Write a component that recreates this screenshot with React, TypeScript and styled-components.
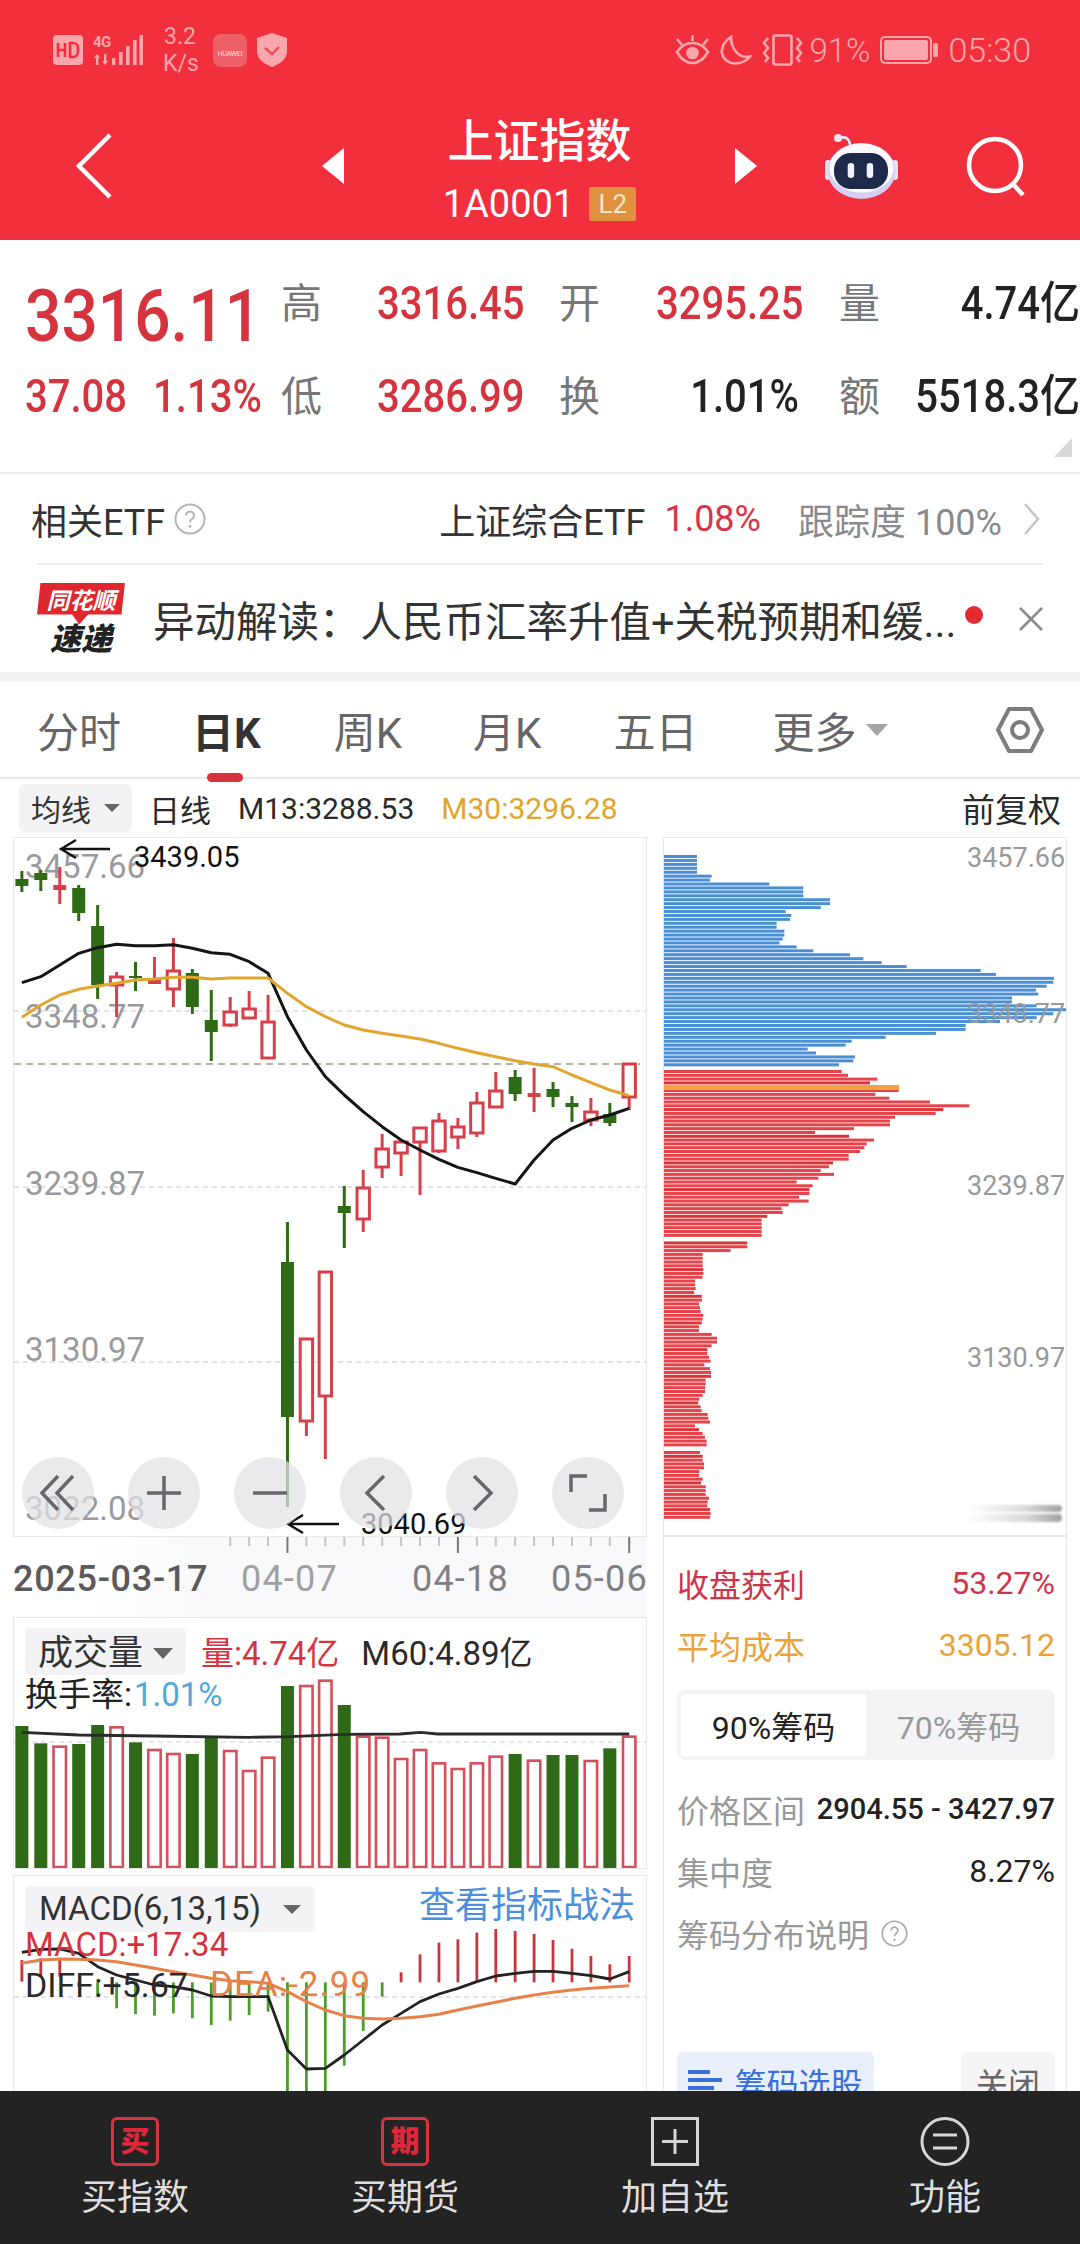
import styled, { createGlobalStyle } from 'styled-components'

const RED = '#d5343f'
const GREEN = '#2f6b16'
const STATUS = '#faa6ac'

const GlobalStyle = createGlobalStyle`
  html, body { margin: 0; padding: 0; background: #fff; }
  body { font-family: Roboto, "Noto Sans CJK SC", sans-serif; color: #222; }
  * { box-sizing: border-box; }
`

// scale of the reference crops used to read the curves
const px = (z: number) => z / 2.376
const py = (z: number, top: number) => top + z / 3

// wick top, wick bottom, body top, body bottom, up
const CANDLES: [number, number, number, number, boolean][] = [
  [871, 892, 879, 886, false], [870, 891, 873, 880, false], [867, 904, 885, 890, true],
  [885, 921, 888, 913, false], [905, 999, 926, 985, false], [972, 1017, 977, 985, true],
  [962, 991, 976, 978, false], [957, 984, 978, 984, true], [938, 1007, 971, 989, true],
  [969, 1014, 973, 1007, false], [990, 1061, 1020, 1032, false], [997, 1027, 1012, 1025, true],
  [991, 1019, 1009, 1018, true], [995, 1058, 1022, 1058, true], [1222, 1507, 1262, 1417, false],
  [1339, 1436, 1339, 1421, true], [1272, 1459, 1272, 1396, true], [1186, 1248, 1206, 1213, false],
  [1170, 1232, 1188, 1219, true], [1134, 1178, 1149, 1167, true], [1140, 1176, 1142, 1153, true],
  [1128, 1195, 1128, 1142, true], [1113, 1153, 1121, 1151, true], [1118, 1149, 1127, 1137, true],
  [1092, 1137, 1103, 1133, true], [1072, 1107, 1091, 1107, true], [1070, 1101, 1077, 1094, false],
  [1068, 1112, 1093, 1097, true], [1082, 1107, 1089, 1097, false], [1096, 1122, 1103, 1107, false],
  [1098, 1126, 1112, 1120, true], [1103, 1126, 1114, 1123, false], [1064, 1110, 1064, 1097, true],
]

const XS = [52, 97, 142, 187, 232, 277, 322, 367, 412, 457, 502, 547, 592, 637, 683, 728, 773, 818, 863, 908, 953, 998, 1043, 1088, 1133, 1178, 1224, 1269, 1314, 1359, 1404, 1449, 1495]

const M13 = [908, 890, 855, 820, 803, 793, 797, 797, 794, 805, 818, 823, 845, 880, 1010, 1110, 1190, 1245, 1295, 1340, 1380, 1410, 1438, 1462, 1478, 1495, 1512, 1440, 1380, 1345, 1320, 1305, 1285]
const M30 = [1012, 975, 945, 928, 918, 910, 900, 897, 892, 892, 897, 894, 894, 894, 940, 980, 1010, 1035, 1050, 1060, 1068, 1077, 1090, 1105, 1118, 1130, 1142, 1152, 1160, 1185, 1208, 1230, 1247]

const VOLUME = [378, 430, 440, 432, 375, 382, 427, 450, 462, 462, 413, 453, 513, 473, 258, 258, 242, 315, 410, 413, 477, 450, 490, 507, 490, 470, 462, 482, 465, 465, 483, 445, 410]
const VOLUME_LINE: [number, number][] = [[52, 397], [187, 405], [365, 408], [590, 412], [690, 410], [818, 403], [950, 402], [1000, 397], [1040, 402], [1495, 402]]

const MACD_BARS = [[270, 335], [265, 320], [267, 320], [337, 350], [337, 378], [337, 415], [337, 432], [337, 437], [337, 430], [337, 445], [337, 465], [337, 452], [337, 435], [337, 425], [337, 760], [337, 760], [337, 760], [337, 587], [337, 483], [337, 380], [307, 337], [253, 337], [218, 337], [208, 337], [188, 337], [177, 337], [183, 337], [192, 337], [210, 337], [236, 337], [258, 337], [283, 337], [258, 337]]
const DIFF = [247, 238, 237, 250, 290, 315, 330, 345, 350, 360, 378, 380, 380, 380, 540, 597, 595, 555, 510, 465, 430, 395, 372, 355, 335, 318, 310, 304, 304, 310, 317, 327, 305]
const DEA = [280, 270, 267, 268, 270, 275, 285, 295, 305, 315, 325, 332, 335, 340, 365, 395, 420, 437, 445, 447, 445, 440, 433, 420, 408, 397, 385, 375, 367, 360, 355, 351, 347]

const CHIP_BLUE = [141, 141, 141, 141, 141, 185, 180, 358, 460, 460, 460, 540, 540, 512, 407, 424, 420, 380, 380, 403, 403, 398, 388, 440, 490, 600, 640, 695, 770, 992, 1038, 1212, 1210, 1190, 1158, 1165, 1086, 1086, 1160, 1250, 1210, 1160, 1050, 947, 947, 858, 707, 605, 587, 473, 498, 615, 610, 567]
const CHIP_RED = [575, 594, 682, 660, 746, 746, 676, 718, 840, 958, 880, 857, 735, 720, 720, 612, 495, 597, 672, 650, 643, 630, 596, 596, 549, 537, 512, 552, 505, 440, 488, 478, 478, 447, 476, 416, 395, 398, 352, 335, 335, 335, 335, 335, 0, 292, 292, 242, 158, 158, 158, 158, 160, 160, 157, 135, 135, 137, 132, 155, 156, 147, 150, 152, 160, 158, 155, 147, 147, 185, 201, 201, 185, 172, 172, 177, 182, 163, 180, 183, 183, 167, 167, 165, 165, 158, 148, 145, 152, 155, 173, 175, 180, 135, 147, 158, 165, 170, 170, 0, 150, 158, 158, 162, 162, 148, 147, 158, 153, 167, 167, 167, 177, 173, 172, 180, 182, 180]

const toPoints = (xs: number[], ys: number[], top: number) => xs.map((x, i) => `${px(x)},${py(ys[i], top)}`).join(' ')

const Page = styled.div`
  width: 1080px;
  height: 2244px;
  overflow: hidden;
  display: flex;
  flex-direction: column;
  background: #fff;
`

const Header = styled.header`
  height: 240px;
  background: #f2303d;
  color: #fff;
  flex: none;
`

const StatusBar = styled.div`
  height: 100px;
  padding: 0 49px 0 53px;
  display: flex;
  align-items: center;
  justify-content: space-between;
  color: ${STATUS};
`

const StatusGroup = styled.div`
  display: flex;
  align-items: center;
  gap: 10px;
`

const Speed = styled.div`
  font-size: 23px;
  line-height: 27px;
  width: 34px;
  margin: 0 6px 0 10px;
  text-align: center;
`

const StatusText = styled.span<{ $size: number; $left?: number }>`
  font-size: ${p => p.$size}px;
  font-weight: 300;
  margin-left: ${p => p.$left ?? 0}px;
`

const HuaweiBadge = styled.div`
  width: 34px;
  height: 33px;
  border-radius: 8px;
  background: #ee6068;
  color: #fde;
  font-size: 7px;
  letter-spacing: -0.2px;
  display: flex;
  align-items: flex-end;
  justify-content: center;
  padding-bottom: 9px;
`

const NavBar = styled.nav`
  height: 140px;
  padding-bottom: 8px;
  display: grid;
  grid-template-columns: 322px 22px 391px 22px 68px 73px 68px 60px 54px;
  align-items: center;
`

const BackCell = styled.div`
  padding-left: 76px;
  display: flex;
`

const TitleBlock = styled.div`
  margin-top: 7px;
  display: flex;
  flex-direction: column;
  align-items: center;
  gap: 23px;
`

const Title = styled.div`
  font-size: 46px;
  line-height: 46px;
  font-weight: 500;
`

const SubTitle = styled.div`
  display: flex;
  align-items: center;
  gap: 15px;
  font-size: 38px;
  line-height: 34px;
  font-weight: 400;
`

const L2Badge = styled.span`
  width: 47px;
  height: 34px;
  background: #e0913f;
  color: #fbe6cf;
  border-radius: 2px;
  font-size: 26px;
  display: flex;
  align-items: center;
  justify-content: center;
`

const Quote = styled.section`
  position: relative;
  height: 232px;
  flex: none;
  padding: 34px 0 0 25px;
  display: grid;
  grid-template-columns: 256px 96px 182px 97px 183px 66px 175px;
  grid-auto-rows: 60px;
  row-gap: 33px;
  align-items: center;
`

const BigPrice = styled.div`
  font-size: 64px;
  line-height: 70px;
  font-weight: 500;
  color: ${RED};
  margin-top: 26px;
  transform: scaleY(1.13);
`

const LeadRow = styled.div`
  display: flex;
  gap: 26px;
`

const QuoteLabel = styled.div`
  font-size: 41px;
  line-height: 50px;
  color: #777;
`

const QuoteValue = styled.div<{ $dark?: boolean; $right?: boolean; $pad?: number }>`
  font-size: 40px;
  line-height: 50px;
  font-weight: 500;
  white-space: nowrap;
  color: ${p => (p.$dark ? '#222' : RED)};
  text-align: ${p => (p.$right ? 'right' : 'left')};
  padding-right: ${p => p.$pad ?? 0}px;
  transform: scaleY(1.14);
`

const Corner = styled.div`
  position: absolute;
  right: 8px;
  bottom: 15px;
  width: 18px;
  height: 19px;
  background: #d9d9dc;
  clip-path: polygon(100% 0, 100% 100%, 0 100%);
`

const EtfRow = styled.div`
  height: 91px;
  flex: none;
  border-top: 2px solid #ececee;
  padding: 0 39px 0 31px;
  display: flex;
  align-items: center;
  font-size: 36px;
  color: #333;
`

const EtfSide = styled.div<{ $grey?: boolean; $red?: boolean; $gap?: number }>`
  margin-left: ${p => p.$gap ?? 0}px;
  color: ${p => (p.$red ? '#d8344a' : p.$grey ? '#8a8a8e' : 'inherit')};
  white-space: nowrap;
  display: flex;
`

const NewsRow = styled.div`
  height: 109px;
  flex: none;
  margin: 0 37px;
  border-top: 2px solid #ececee;
  display: flex;
  align-items: center;
`

const Logo = styled.div`
  width: 88px;
  margin: 0 28px 0 0;
  display: flex;
  flex-direction: column;
  align-items: center;
`

const LogoFlag = styled.div`
  width: 88px;
  height: 42px;
  padding-bottom: 10px;
  background: #e0262f;
  color: #fff;
  font-size: 23px;
  font-weight: 700;
  font-style: italic;
  display: flex;
  align-items: center;
  justify-content: center;
  clip-path: polygon(4% 0, 100% 0, 96% 76%, 58% 76%, 48% 100%, 40% 76%, 0 76%);
`

const LogoText = styled.div`
  font-size: 31px;
  line-height: 30px;
  font-weight: 900;
  font-style: italic;
  color: #222;
`

const NewsText = styled.div`
  width: 804px;
  flex: none;
  font-size: 41.5px;
  color: #333;
  white-space: nowrap;
`

const RedDot = styled.span`
  width: 18px;
  height: 18px;
  border-radius: 50%;
  background: #e52a32;
  margin: -8px 36px 0 8px;
  flex: none;
`

const Band = styled.div`
  height: 10px;
  flex: none;
  background: #f3f3f5;
`

const Tabs = styled.div`
  height: 97px;
  flex: none;
  border-bottom: 2px solid #e8e8ea;
  display: flex;
  align-items: center;
  padding: 0 36px 0 37px;
  font-size: 42px;
  color: #666;
`

const Tab = styled.div<{ $active?: boolean; $left: number }>`
  position: relative;
  margin-left: ${p => p.$left}px;
  font-weight: ${p => (p.$active ? 700 : 400)};
  color: ${p => (p.$active ? '#333' : '#666')};
  white-space: nowrap;
  display: flex;
  align-items: center;
  gap: 10px;
`

const TabMark = styled.span`
  position: absolute;
  left: 15px;
  bottom: -22px;
  width: 36px;
  height: 9px;
  border-radius: 5px;
  background: ${RED};
`

const DownTriangle = styled.span<{ $size: number; $color?: string }>`
  width: 0;
  height: 0;
  flex: none;
  border-left: ${p => p.$size}px solid transparent;
  border-right: ${p => p.$size}px solid transparent;
  border-top: ${p => p.$size * 1.1}px solid ${p => p.$color ?? '#666'};
`

const ChartArea = styled.div`
  flex: 1;
  min-height: 0;
  overflow: hidden;
  padding: 0 13px;
`

const Toolbar = styled.div`
  height: 58px;
  display: flex;
  align-items: center;
  gap: 27px;
  padding: 0 6px;
  font-size: 30px;
`

const Chip = styled.div<{ $width: number; $height: number; $gap: number; $size: number; $drop?: number }>`
  width: ${p => p.$width}px;
  height: ${p => p.$height}px;
  padding-top: ${p => p.$drop ?? 0}px;
  background: #f3f3f5;
  border-radius: 5px;
  display: flex;
  align-items: center;
  justify-content: center;
  gap: ${p => p.$gap}px;
  font-size: ${p => p.$size}px;
  color: #333;
  white-space: nowrap;
  flex: none;
`

const ToolText = styled.span<{ $color?: string; $end?: boolean; $left?: number; $size?: number }>`
  color: ${p => p.$color ?? '#2a2a2a'};
  white-space: nowrap;
  font-size: ${p => p.$size ?? 30}px;
  margin-left: ${p => (p.$end ? 'auto' : `${p.$left ?? 0}px`)};
`

const Columns = styled.div`
  display: grid;
  grid-template-columns: 634px 404px;
  column-gap: 16px;
  align-items: start;
`

const LeftColumn = styled.div`
  display: flex;
  flex-direction: column;
`

const Panel = styled.div<{ $height: number }>`
  position: relative;
  width: 634px;
  height: ${p => p.$height}px;
  border: 1px solid #e8e8ec;
  overflow: hidden;
`

const ChartSvg = styled.svg`
  display: block;
  font-family: Roboto, sans-serif;
`

const ButtonRow = styled.div`
  position: absolute;
  left: 8px;
  bottom: 7px;
  display: flex;
  gap: 34px;
`

const RoundButton = styled.div`
  width: 72px;
  height: 72px;
  border-radius: 50%;
  background: rgba(226, 226, 229, 0.72);
  display: flex;
  align-items: center;
  justify-content: center;
`

const DateStrip = styled.div`
  height: 80px;
  background: linear-gradient(90deg, #fff 12%, #f9f9fb 30%);
`

const DateRow = styled.div`
  display: grid;
  grid-template-columns: 228px 171px 139px auto;
  font-size: 36px;
  line-height: 40px;
  margin-top: 6px;
`

const DateText = styled.span<{ $color: string; $bold?: boolean }>`
  color: ${p => p.$color};
  letter-spacing: ${p => (p.$bold ? 0.7 : 1.2)}px;
  font-weight: ${p => (p.$bold ? 500 : 400)};
  white-space: nowrap;
`

const Legend = styled.div`
  position: absolute;
  left: 11px;
  top: 10px;
  right: 11px;
  font-size: 33px;
  line-height: 40px;
`

const LegendRow = styled.div<{ $gap?: number; $up?: number }>`
  display: flex;
  align-items: center;
  gap: ${p => p.$gap ?? 0}px;
  margin-top: ${p => -(p.$up ?? 0)}px;
`

const LegendText = styled.span<{ $color?: string; $left?: number; $end?: boolean; $up?: number; $size?: number; $track?: number }>`
  color: ${p => p.$color ?? '#2a2a2a'};
  white-space: nowrap;
  font-size: ${p => p.$size ?? 33}px;
  letter-spacing: ${p => p.$track ?? 0}px;
  margin-left: ${p => (p.$end ? 'auto' : `${p.$left ?? 0}px`)};
  margin-top: ${p => -(p.$up ?? 0)}px;
`

const VolumePanel = styled(Panel)`
  margin-bottom: 6px;
`

const RightPanel = styled.div`
  width: 404px;
  height: 1300px;
  border: 1px solid #e8e8ec;
  border-bottom: none;
  display: flex;
  flex-direction: column;
`

const ChipChart = styled.div`
  height: 699px;
  border-bottom: 2px solid #e8e8ec;
  flex: none;
`

const Stats = styled.div`
  padding: 15px 11px 0 13px;
  font-size: 32px;
`

const StatRow = styled.div<{ $color?: string }>`
  height: 62px;
  display: flex;
  align-items: center;
  justify-content: space-between;
  color: ${p => p.$color ?? '#999'};
  white-space: nowrap;
`

const StatValue = styled.span<{ $small?: boolean }>`
  color: inherit;
  font-size: ${p => (p.$small ? 29 : 32)}px;
`

const StatDark = styled(StatValue)`
  color: #222;
  font-weight: ${p => (p.$small ? 500 : 400)};
`

const Toggle = styled.div`
  height: 70px;
  margin: 14px 0 18px;
  background: #f4f4f6;
  border-radius: 8px;
  padding: 4px;
  display: grid;
  grid-template-columns: 185px 1fr;
`

const ToggleItem = styled.div<{ $active?: boolean }>`
  background: ${p => (p.$active ? '#fff' : 'transparent')};
  color: ${p => (p.$active ? '#222' : '#999')};
  border-radius: 4px;
  display: flex;
  align-items: center;
  justify-content: center;
`

const HelpLabel = styled.span`
  display: flex;
  align-items: center;
  gap: 12px;
`

const PanelButtons = styled.div`
  margin-top: 88px;
  display: flex;
  justify-content: space-between;
`

const PanelButton = styled.div<{ $blue?: boolean; $width: number }>`
  width: ${p => p.$width}px;
  height: 60px;
  border-radius: 6px;
  background: ${p => (p.$blue ? '#e9effb' : '#f5f5f7')};
  color: ${p => (p.$blue ? '#3a6fd8' : '#666')};
  display: flex;
  align-items: center;
  justify-content: center;
  gap: 12px;
`

const BottomNav = styled.nav`
  height: 153px;
  flex: none;
  background: #232323;
  display: grid;
  grid-template-columns: repeat(4, 270px);
`

const NavItem = styled.div`
  display: flex;
  flex-direction: column;
  align-items: center;
  padding-top: 26px;
  gap: 12px;
  color: #dedede;
  font-size: 36px;
  line-height: 40px;
`

const RedIcon = styled.div`
  width: 48px;
  height: 49px;
  border: 3px solid #d9333e;
  border-radius: 6px;
  color: #e0263a;
  font-size: 29px;
  font-weight: 900;
  display: flex;
  align-items: center;
  justify-content: center;
`

const LineIcon = styled.svg`
  display: block;
  color: #d6d6d6;
`

const CandleChart = () => (
  <ChartSvg width={632} height={698} viewBox="14 838 632 698">
    {[1011, 1187, 1362].map(y => (
      <line key={y} x1={14} x2={646} y1={y} y2={y} stroke="#dcdce0" strokeWidth={1.5} strokeDasharray="5 4" />
    ))}
    <line x1={14} x2={640} y1={1064} y2={1064} stroke="#b4b4a6" strokeWidth={2} strokeDasharray="7 5" />
    {[['3457.66', 878], ['3348.77', 1028], ['3239.87', 1195], ['3130.97', 1361], ['3022.08', 1520]].map(([t, y]) => (
      <text key={t} x={25} y={y} fontSize={33} fill="#9a9a9e">{t}</text>
    ))}
    {CANDLES.map(([wt, wb, bt, bb, up], i) => {
      const x = px(XS[i])
      const color = up ? '#d5404a' : GREEN
      const thin = bb - bt < 8
      return (
        <g key={i}>
          <line x1={x} x2={x} y1={wt} y2={wb} stroke={color} strokeWidth={3} />
          {up && !thin ? (
            <rect x={x - 6.2} y={bt} width={12.4} height={bb - bt} fill="#fff" stroke={color} strokeWidth={3} />
          ) : (
            <rect x={x - 6.5} y={bt} width={13} height={bb - bt} fill={color} />
          )}
        </g>
      )
    })}
    <polyline points={toPoints(XS, M13, 680)} fill="none" stroke="#141414" strokeWidth={3} strokeLinejoin="round" />
    <polyline points={toPoints(XS, M30, 680)} fill="none" stroke="#e0a62e" strokeWidth={3} strokeLinejoin="round" />
    <path d="M110 849H61M76 840l-15 9 15 9" fill="none" stroke="#111" strokeWidth={2.4} />
    <text x={134} y={867} fontSize={29} fill="#111">3439.05</text>
    <path d="M339 1524H288M303 1515l-15 9 15 9" fill="none" stroke="#111" strokeWidth={2.4} />
    <text x={361} y={1534} fontSize={29} fill="#111">3040.69</text>
  </ChartSvg>
)

const VolumeChart = () => (
  <ChartSvg width={632} height={250} viewBox="14 1618 632 250">
    <line x1={14} x2={646} y1={1742} y2={1742} stroke="#e0e0e4" strokeWidth={1.5} strokeDasharray="5 4" />
    {VOLUME.map((z, i) => {
      const up = CANDLES[i][4]
      const top = py(z, 1600)
      const x = px(XS[i])
      return up ? (
        <rect key={i} x={x - 6.2} y={top} width={12.4} height={1867 - top} fill="#fff" stroke="#d5505a" strokeWidth={2.6} />
      ) : (
        <rect key={i} x={x - 6.5} y={top} width={13} height={1868 - top} fill={GREEN} />
      )
    })}
    <polyline points={VOLUME_LINE.map(([x, y]) => `${px(x)},${py(y, 1600)}`).join(' ')} fill="none" stroke="#2b2b2b" strokeWidth={2.8} />
  </ChartSvg>
)

const MacdChart = () => (
  <ChartSvg width={632} height={240} viewBox="14 1876 632 240">
    <line x1={14} x2={646} y1={1997} y2={1997} stroke="#dcdce0" strokeWidth={1.5} strokeDasharray="5 4" />
    {MACD_BARS.map(([a, b], i) => (
      <line key={i} x1={px(XS[i])} x2={px(XS[i])} y1={py(a, 1870)} y2={py(b, 1870)} stroke={a < 337 ? '#c9343e' : '#4b9e2a'} strokeWidth={2.8} />
    ))}
    <polyline points={toPoints(XS, DIFF, 1870)} fill="none" stroke="#222" strokeWidth={2.8} strokeLinejoin="round" />
    <polyline points={toPoints(XS, DEA, 1870)} fill="none" stroke="#e8804a" strokeWidth={3} strokeLinejoin="round" />
  </ChartSvg>
)

const ChipDistribution = () => (
  <ChartSvg width={402} height={697} viewBox="664 838 402 697">
    <defs>
      <linearGradient id="smudge">
        <stop offset="0" stopColor="#fff" />
        <stop offset="0.6" stopColor="#dcdcdc" />
        <stop offset="1" stopColor="#a0a0a0" />
      </linearGradient>
      <filter id="soft"><feGaussianBlur stdDeviation="1.2" /></filter>
    </defs>
    {CHIP_BLUE.map((z, i) => (
      <rect key={i} x={664} y={855 + i * 3.93} width={(z - 42) / 3} height={3} fill="#4a8fd6" />
    ))}
    {CHIP_RED.map((z, i) => (
      <rect key={i} x={664} y={1070 + i * 3.81} width={Math.max(z - 42, 0) / 3} height={3} fill={i % 7 === 3 ? '#d8343a' : '#e5424a'} />
    ))}
    <rect x={664} y={1085} width={235} height={5} fill="#f2a33f" />
    {[['3457.66', 867], ['3348.77', 1023], ['3239.87', 1195], ['3130.97', 1367]].map(([t, y]) => (
      <text key={t} x={967} y={y} fontSize={27} fill="#999">{t}</text>
    ))}
    <g filter="url(#soft)">
      <rect x={967} y={1505} width={95} height={7} rx={3.5} fill="url(#smudge)" />
      <rect x={967} y={1514} width={95} height={8} rx={4} fill="url(#smudge)" />
    </g>
  </ChartSvg>
)

const HelpIcon = ({ size, color }: { size: number; color: string }) => (
  <svg width={size} height={size} viewBox="0 0 32 32">
    <circle cx={16} cy={16} r={14.5} fill="none" stroke={color} strokeWidth={2} />
    <path d="M12 12.5a4 4 0 1 1 6.3 3.2c-1.5 1-2.3 1.8-2.3 3.6" fill="none" stroke={color} strokeWidth={2} />
    <circle cx={16} cy={23.5} r={1.4} fill={color} />
  </svg>
)

const Robot = () => (
  <svg width={73} height={66} viewBox="0 0 73 66">
    <path d="M15 5c6-2 9 1 10 6" fill="none" stroke="#efe9fb" strokeWidth={2.6} strokeLinecap="round" />
    <circle cx={13} cy={5} r={4} fill="#f4e4ee" />
    <rect x={0} y={27} width={6} height={20} rx={3} fill="#e9e2f8" />
    <rect x={67} y={27} width={6} height={20} rx={3} fill="#e9e2f8" />
    <ellipse cx={36.5} cy={38} rx={34} ry={28} fill="#d8d0f4" />
    <ellipse cx={36.5} cy={35} rx={32} ry={24.5} fill="#fbfaff" />
    <rect x={9} y={20} width={54} height={36} rx={17} fill="#1e2a4a" />
    <rect x={22.7} y={30} width={6.5} height={15} rx={3.2} fill="#f0f3ff" />
    <rect x={41.7} y={30} width={6.5} height={15} rx={3.2} fill="#f0f3ff" />
  </svg>
)

export default function App() {
  return (
    <Page>
      <GlobalStyle />
      <Header>
        <StatusBar>
          <StatusGroup>
            <svg width={30} height={30} viewBox="0 0 30 30">
              <rect width={30} height={30} rx={4} fill={STATUS} />
              <path d="M5 8v14M5 15h7M12 8v14M17 8v14h3a5 5 0 0 0 5-5v-4a5 5 0 0 0-5-5z" fill="none" stroke="#f2303d" strokeWidth={2.6} />
            </svg>
            <svg width={50} height={32} viewBox="0 0 50 32" fill={STATUS}>
              <text x={0} y={13} fontSize={15} fontWeight={700} letterSpacing={-0.5} fontFamily="Roboto, sans-serif">4G</text>
              <rect x={19} y={24} width={3.4} height={7} />
              <rect x={26} y={18} width={3.6} height={13} />
              <rect x={33} y={12} width={3.6} height={19} />
              <rect x={40} y={6} width={3.6} height={25} />
              <rect x={46.4} y={1} width={3.6} height={30} />
              <path d="M3 21h2.4v10H3zM1 24l3-4 3 4zM11 20h2.4v9H11zM9 27h6l-3 4z" />
            </svg>
            <Speed>3.2<br />K/s</Speed>
            <HuaweiBadge>HUAWEI</HuaweiBadge>
            <svg width={30} height={34} viewBox="0 0 30 34">
              <path d="M15 0l15 5v13c0 8-7 13-15 16C7 31 0 26 0 18V5z" fill={STATUS} />
              <path d="M8 15l7 6 7-7" fill="none" stroke="#e0505c" strokeWidth={2.4} />
            </svg>
          </StatusGroup>
          <StatusGroup>
            <svg width={35} height={30} viewBox="0 0 35 30" fill="none" stroke={STATUS} strokeWidth={2.6}>
              <path d="M2 17c4-6 9-9 15.500-9s11.500 3 15.500 9c-4 7-9 11-15.500 11S6 24 2 17z" />
              <circle cx={17.500} cy={18} r={5} fill={STATUS} />
              <path d="M2 4l5 6M33 4l-5 6M17.500 0v6" />
            </svg>
            <svg width={32} height={30} viewBox="0 0 32 30" fill="none" stroke={STATUS} strokeWidth={2.6}>
              <path d="M11 2C5 6 1 11 2 18c1 6 7 11 14 10.500 6-.5 11-3 14-7-10 2-19-6-19-19.500z" />
            </svg>
            <svg width={41} height={32} viewBox="0 0 41 32" fill="none" stroke={STATUS} strokeWidth={2.6}>
              <rect x={11.500} y={1.500} width={18} height={29} rx={2} />
              <path d="M6 4L2 9l4 5-4 5 4 5-3 4M35 4l4 5-4 5 4 5-4 5 3 4" />
            </svg>
            <StatusText $size={33} $left={-4}>91%</StatusText>
            <svg width={58} height={28} viewBox="0 0 58 28">
              <rect x={1} y={1} width={50} height={26} rx={4} fill="none" stroke={STATUS} strokeWidth={2} />
              <rect x={4} y={4} width={44} height={20} rx={2} fill={STATUS} />
              <rect x={53} y={7} width={5} height={14} rx={1.500} fill={STATUS} />
            </svg>
            <StatusText $size={34}>05:30</StatusText>
          </StatusGroup>
        </StatusBar>
        <NavBar>
          <BackCell>
            <svg width={36} height={66} viewBox="0 0 36 66" fill="none" stroke="#fff" strokeWidth={4.5}>
              <path d="M34 2L3 33l31 31" />
            </svg>
          </BackCell>
          <svg width={22} height={36} viewBox="0 0 22 36"><path d="M22 0v36L0 18z" fill="#fff" /></svg>
          <TitleBlock>
            <Title>上证指数</Title>
            <SubTitle>1A0001<L2Badge>L2</L2Badge></SubTitle>
          </TitleBlock>
          <svg width={22} height={36} viewBox="0 0 22 36"><path d="M0 0v36l22-18z" fill="#fff" /></svg>
          <span />
          <Robot />
          <span />
          <svg width={60} height={60} viewBox="0 0 60 60" fill="none" stroke="#fff" strokeWidth={4.5}>
            <circle cx={29} cy={29} r={26} />
            <path d="M47 48l10 11" />
          </svg>
        </NavBar>
      </Header>

      <Quote>
        <BigPrice>3316.11</BigPrice>
        <QuoteLabel>高</QuoteLabel>
        <QuoteValue>3316.45</QuoteValue>
        <QuoteLabel>开</QuoteLabel>
        <QuoteValue>3295.25</QuoteValue>
        <QuoteLabel>量</QuoteLabel>
        <QuoteValue $dark $right>4.74亿</QuoteValue>
        <LeadRow>
          <QuoteValue>37.08</QuoteValue>
          <QuoteValue>1.13%</QuoteValue>
        </LeadRow>
        <QuoteLabel>低</QuoteLabel>
        <QuoteValue>3286.99</QuoteValue>
        <QuoteLabel>换</QuoteLabel>
        <QuoteValue $dark $right $pad={40}>1.01%</QuoteValue>
        <QuoteLabel>额</QuoteLabel>
        <QuoteValue $dark $right>5518.3亿</QuoteValue>
        <Corner />
      </Quote>

      <EtfRow>
        <EtfSide>相关ETF</EtfSide>
        <EtfSide $gap={9}><HelpIcon size={32} color="#b5b5b8" /></EtfSide>
        <EtfSide $gap={233}>上证综合ETF</EtfSide>
        <EtfSide $red $gap={19}>1.08%</EtfSide>
        <EtfSide $grey $gap={37}>跟踪度 100%</EtfSide>
        <EtfSide $gap={22}>
          <svg width={16} height={32} viewBox="0 0 16 32" fill="none" stroke="#c4c4c6" strokeWidth={2.4}>
            <path d="M1 1l13 15L1 31" />
          </svg>
        </EtfSide>
      </EtfRow>

      <NewsRow>
        <Logo>
          <LogoFlag>同花顺</LogoFlag>
          <LogoText>速递</LogoText>
        </Logo>
        <NewsText>异动解读：人民币汇率升值+关税预期和缓...</NewsText>
        <RedDot />
        <svg width={24} height={24} viewBox="0 0 24 24" fill="none" stroke="#8c8c90" strokeWidth={2.6}>
          <path d="M1 1l22 22M23 1L1 23" />
        </svg>
      </NewsRow>
      <Band />

      <Tabs>
        <Tab $left={0}>分时</Tab>
        <Tab $left={71} $active>日K<TabMark /></Tab>
        <Tab $left={73}>周K</Tab>
        <Tab $left={71}>月K</Tab>
        <Tab $left={72}>五日</Tab>
        <Tab $left={75}>更多<DownTriangle $size={11} $color="#a4a4a8" /></Tab>
        <Tab $left={108}>
          <svg width={48} height={46} viewBox="0 0 48 46" fill="none" stroke="#7b7b80" strokeWidth={4}>
            <path d="M13 2h22l11 21-11 21H13L2 23z" strokeLinejoin="round" />
            <circle cx={24} cy={23} r={8} />
          </svg>
        </Tab>
      </Tabs>

      <ChartArea>
        <Toolbar>
          <Chip $width={113} $height={48} $gap={13} $size={30}>均线<DownTriangle $size={8} /></Chip>
          <ToolText $left={-10} $size={31}>日线</ToolText>
          <ToolText>M13:3288.53</ToolText>
          <ToolText $color="#dfa52e">M30:3296.28</ToolText>
          <ToolText $end $size={33}>前复权</ToolText>
        </Toolbar>
        <Columns>
          <LeftColumn>
            <Panel $height={700}>
              <CandleChart />
              <ButtonRow>
                <RoundButton>
                  <svg width={36} height={36} viewBox="0 0 36 36" fill="none" stroke="#66666c" strokeWidth={3.5}>
                    <path d="M18 1L2 18l16 17M33 1L17 18l16 17" />
                  </svg>
                </RoundButton>
                <RoundButton>
                  <svg width={36} height={36} viewBox="0 0 36 36" fill="none" stroke="#66666c" strokeWidth={3.5}>
                    <path d="M18 1v34M1 18h34" />
                  </svg>
                </RoundButton>
                <RoundButton>
                  <svg width={36} height={36} viewBox="0 0 36 36" fill="none" stroke="#66666c" strokeWidth={3.5}>
                    <path d="M1 18h34" />
                  </svg>
                </RoundButton>
                <RoundButton>
                  <svg width={36} height={36} viewBox="0 0 36 36" fill="none" stroke="#66666c" strokeWidth={3.5}>
                    <path d="M26 1L9 18l17 17" />
                  </svg>
                </RoundButton>
                <RoundButton>
                  <svg width={36} height={36} viewBox="0 0 36 36" fill="none" stroke="#66666c" strokeWidth={3.5}>
                    <path d="M10 1l17 17-17 17" />
                  </svg>
                </RoundButton>
                <RoundButton>
                  <svg width={38} height={38} viewBox="0 0 38 38" fill="none" stroke="#66666c" strokeWidth={3.5}>
                    <path d="M2 18V2h16M36 20v16H20" />
                  </svg>
                </RoundButton>
              </ButtonRow>
            </Panel>
            <DateStrip>
              <ChartSvg width={634} height={16} viewBox="13 1537 634 16">
                {XS.map((x, i) => {
                  const major = i === 14 || i === 23 || i === 32
                  return i > 10 ? (
                    <line key={i} x1={px(x)} x2={px(x)} y1={1537} y2={major ? 1553 : 1546} stroke={major ? '#777' : '#c4c4c8'} strokeWidth={2} />
                  ) : null
                })}
              </ChartSvg>
              <DateRow>
                <DateText $color="#5a5a5e" $bold>2025-03-17</DateText>
                <DateText $color="#a0a0a4">04-07</DateText>
                <DateText $color="#808084">04-18</DateText>
                <DateText $color="#808084">05-06</DateText>
              </DateRow>
            </DateStrip>
            <VolumePanel $height={252}>
              <VolumeChart />
              <Legend>
                <LegendRow>
                  <Chip $width={161} $height={47} $gap={10} $size={35} $drop={4}>成交量<DownTriangle $size={10} /></Chip>
                  <LegendText $color={RED} $left={15} $up={-4}>量:4.74亿</LegendText>
                  <LegendText $left={22} $up={-4}>M60:4.89亿</LegendText>
                </LegendRow>
                <LegendRow>
                  换手率:<LegendText $color="#4fa8dc" $left={2}>1.01%</LegendText>
                </LegendRow>
              </Legend>
            </VolumePanel>
            <Panel $height={240}>
              <MacdChart />
              <Legend>
                <LegendRow>
                  <Chip $width={290} $height={46} $gap={22} $size={33}>MACD(6,13,15)<DownTriangle $size={9} /></Chip>
                  <LegendText $color="#4c8fdd" $end $up={6} $size={36}>查看指标战法</LegendText>
                </LegendRow>
                <LegendRow $up={7}>
                  <LegendText $color={RED}>MACD:+17.34</LegendText>
                </LegendRow>
                <LegendRow>
                  <LegendText $size={34}>DIFF:+5.67</LegendText>
                  <LegendText $color="#e8804a" $left={22} $size={35} $track={1}>DEA:-2.99</LegendText>
                </LegendRow>
              </Legend>
            </Panel>
          </LeftColumn>
          <RightPanel>
            <ChipChart>
              <ChipDistribution />
            </ChipChart>
            <Stats>
              <StatRow $color="#d0344a"><span>收盘获利</span><StatValue>53.27%</StatValue></StatRow>
              <StatRow $color="#e8a33c"><span>平均成本</span><StatValue>3305.12</StatValue></StatRow>
              <Toggle>
                <ToggleItem $active>90%筹码</ToggleItem>
                <ToggleItem>70%筹码</ToggleItem>
              </Toggle>
              <StatRow><span>价格区间</span><StatDark $small>2904.55 - 3427.97</StatDark></StatRow>
              <StatRow><span>集中度</span><StatDark>8.27%</StatDark></StatRow>
              <StatRow>
                <HelpLabel>筹码分布说明<HelpIcon size={27} color="#aaa" /></HelpLabel>
              </StatRow>
              <PanelButtons>
                <PanelButton $blue $width={197}>
                  <svg width={34} height={28} viewBox="0 0 34 28" fill="#3a6fd8">
                    <rect y={2} width={22} height={4} />
                    <rect y={10} width={34} height={4} />
                    <rect y={18} width={26} height={4} />
                  </svg>
                  筹码选股
                </PanelButton>
                <PanelButton $width={94}>关闭</PanelButton>
              </PanelButtons>
            </Stats>
          </RightPanel>
        </Columns>
      </ChartArea>

      <BottomNav>
        <NavItem><RedIcon>买</RedIcon>买指数</NavItem>
        <NavItem><RedIcon>期</RedIcon>买期货</NavItem>
        <NavItem>
          <LineIcon width={48} height={49} viewBox="0 0 48 49" fill="none" stroke="currentColor" strokeWidth={3}>
            <rect x={1.5} y={1.5} width={45} height={46} />
            <path d="M24 12v25M11 24.5h26" />
          </LineIcon>
          加自选
        </NavItem>
        <NavItem>
          <LineIcon width={52} height={49} viewBox="0 0 52 49" fill="none" stroke="currentColor" strokeWidth={3}>
            <circle cx={26} cy={24.5} r={23} />
            <path d="M14 18h24M14 31h24" />
          </LineIcon>
          功能
        </NavItem>
      </BottomNav>
    </Page>
  )
}
